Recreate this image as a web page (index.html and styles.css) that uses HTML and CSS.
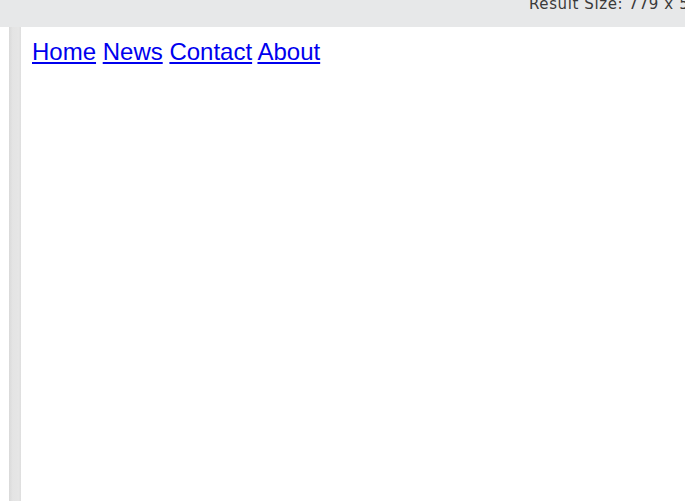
FILE: index.html
```html
<!DOCTYPE html>
<html>
<head>
<meta charset="utf-8">
<link rel="stylesheet" href="styles.css">
</head>
<body>
<div class="topbar"><span class="size">Result Size: 779 x 501</span></div>
<div class="main">
  <div class="gutter"></div>
  <div class="strip"></div>
  <div class="frame">
    <nav class="nav">
      <a href="#">Home</a>
      <a href="#">News</a>
      <a href="#">Contact</a>
      <a href="#">About</a>
    </nav>
  </div>
</div>
</body>
</html>
```
FILE: styles.css
```css
html, body {
  margin: 0;
  padding: 0;
  height: 100%;
  background: #ffffff;
}
body {
  display: flex;
  flex-direction: column;
  overflow: hidden;
}
.topbar {
  height: 27px;
  flex: none;
  background: #e7e8e9;
  display: flex;
  align-items: flex-start;
  padding-left: 529px;
  overflow: hidden;
  white-space: nowrap;
}
.size {
  font-family: "DejaVu Sans", "Open Sans", sans-serif;
  font-size: 15px;
  line-height: 20px;
  color: #3a3a3a;
  margin-top: -6px;
  letter-spacing: 0.6px;
}
.main {
  flex: 1;
  display: flex;
}
.gutter {
  width: 9px;
  flex: none;
  background: #ffffff;
}
.strip {
  width: 12px;
  flex: none;
  background: linear-gradient(to right, #d9d9d9, #e4e4e4 30%, #e6e6e6 80%, #dedede);
}
.frame {
  flex: 1;
  padding: 11px 10px 11px 11px;
  background: #ffffff;
}
.nav {
  font-family: "Liberation Sans", Arial, sans-serif;
  font-size: 24px;
}
.nav a {
  color: #0000ee;
  text-decoration: underline;
}
```
